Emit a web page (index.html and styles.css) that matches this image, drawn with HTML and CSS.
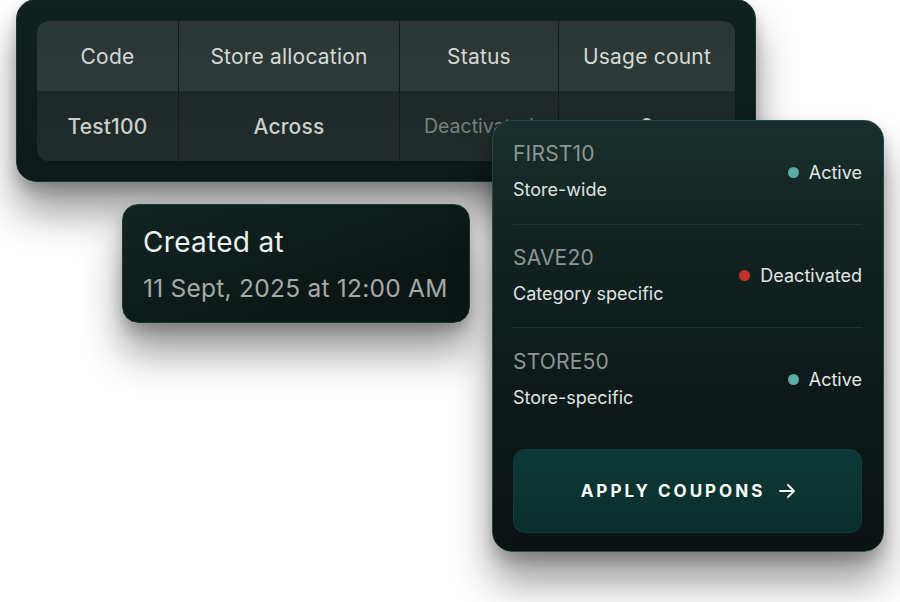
FILE: index.html
```html
<!DOCTYPE html>
<html lang="en">
<head>
<meta charset="utf-8">
<title>Coupons</title>
<link rel="stylesheet" href="styles.css">
</head>
<body>
<div class="canvas">
  <section class="card table-card">
    <div class="table">
      <div class="cell head">Code</div>
      <div class="cell head">Store allocation</div>
      <div class="cell head">Status</div>
      <div class="cell head">Usage count</div>
      <div class="cell body">Test100</div>
      <div class="cell body">Across</div>
      <div class="cell body muted">Deactivated</div>
      <div class="cell body">0</div>
    </div>
  </section>

  <section class="card created-card">
    <div class="created-title">Created at</div>
    <div class="created-date">11 Sept, 2025 at 12:00 AM</div>
  </section>

  <section class="card coupon-card">
    <div class="coupon-row">
      <div class="coupon-info">
        <div class="coupon-code">FIRST10</div>
        <div class="coupon-scope">Store-wide</div>
      </div>
      <div class="status"><span class="dot active"></span>Active</div>
    </div>
    <div class="coupon-row">
      <div class="coupon-info">
        <div class="coupon-code">SAVE20</div>
        <div class="coupon-scope">Category specific</div>
      </div>
      <div class="status"><span class="dot inactive"></span>Deactivated</div>
    </div>
    <div class="coupon-row last">
      <div class="coupon-info">
        <div class="coupon-code">STORE50</div>
        <div class="coupon-scope">Store-specific</div>
      </div>
      <div class="status"><span class="dot active"></span>Active</div>
    </div>
    <button class="apply">
      <span>APPLY COUPONS</span>
      <svg class="arrow" width="18" height="18" viewBox="0 0 18 18" fill="none" stroke="#ffffff" stroke-width="1.8" stroke-linecap="round" stroke-linejoin="round"><path d="M2 9h14M10 3l6 6-6 6"/></svg>
    </button>
  </section>
</div>
</body>
</html>
```

FILE: styles.css
```css
* { box-sizing: border-box; }
html, body { margin: 0; padding: 0; background: #ffffff; }
body { font-family: "Inter", "Noto Sans", sans-serif; width: 900px; height: 602px; overflow: hidden; }

.canvas { position: relative; width: 900px; height: 602px; }

.card {
  position: absolute;
  border: 1px solid #1a3f3b;
  box-shadow: 0 30px 40px rgba(0, 0, 0, 0.4), 0 8px 14px rgba(0, 0, 0, 0.2);
}

/* Table card */
.table-card {
  left: 16px; top: -1px; width: 740px; height: 183px;
  border-radius: 20px;
  background: linear-gradient(180deg, #10211f 0%, #0d1a18 100%);
  padding: 21px 20px 20px 20px;
  border-color: #173a36;
}
.table {
  display: grid;
  grid-template-columns: 141px 221px 159px 177px;
  grid-template-rows: 70px 70px;
  border-radius: 12px;
  overflow: hidden;
}
.cell {
  display: flex; align-items: center; justify-content: center;
  font-size: 21px;
  border-left: 1px solid #131c1b;
  letter-spacing: 0.2px;
}
.cell:nth-child(4n+1) { border-left: none; }
.head { background: linear-gradient(180deg, #2b3634 0%, #2e3a38 100%); color: #d3d9d7; }
.body { background: linear-gradient(180deg, #1e2927 0%, #222d2b 100%); color: #c9cfcd; font-weight: 500; }
.body.muted { color: #78827f; font-weight: 400; font-size: 19.5px; letter-spacing: 0; }

/* Created card */
.created-card {
  left: 122px; top: 204px; width: 348px; height: 119px;
  border-radius: 16px;
  background: linear-gradient(160deg, #112523 0%, #0c1715 70%, #0c1715 100%);
  padding: 19px 19px 0 20px;
  border-color: #183a36;
}
.created-title { font-size: 28px; color: #eef1f0; line-height: 36px; letter-spacing: 0.3px; }
.created-date { font-size: 24.5px; color: #a3aaa8; line-height: 30px; margin-top: 13px; letter-spacing: 0.25px; white-space: nowrap; }

/* Coupon card */
.coupon-card {
  left: 492px; top: 120px; width: 392px; height: 432px;
  border-radius: 20px;
  background: linear-gradient(180deg, #18302d 0%, #112220 30%, #0d1918 65%, #0b1312 100%);
  padding: 0 21px 20px 20px;
  display: flex; flex-direction: column;
  border-color: #1f4a45;
}
.coupon-row {
  height: 103.5px;
  flex: none;
  display: flex; align-items: center; justify-content: space-between;
  border-bottom: 1px solid #1a3532;
  padding-top: 0;
}
.coupon-row.last { border-bottom: none; }
.coupon-info { display: flex; flex-direction: column; gap: 12px; }
.coupon-code { font-size: 21px; line-height: 24px; color: #8c9694; letter-spacing: 0.2px; }
.coupon-scope { font-size: 18px; line-height: 24px; color: #dfe4e3; }
.status { display: flex; align-items: center; font-size: 18px; color: #e2e7e6; gap: 10px; }
.dot { width: 11px; height: 11px; border-radius: 50%; display: inline-block; flex: none; }
.dot.active { background: #5aaca4; }
.dot.inactive { background: #c7302a; }

.apply {
  margin-top: 17px;
  height: 84px;
  flex: none;
  border: 1px solid #0f3f3b;
  border-radius: 12px;
  background: linear-gradient(180deg, #0d3936 0%, #0a2e2b 100%);
  color: #ffffff;
  font-family: "Inter", "Noto Sans", sans-serif;
  font-weight: 700;
  font-size: 17px;
  letter-spacing: 3px;
  display: flex; align-items: center; justify-content: center; gap: 13px;
  padding: 0 0 0 2px;
}
.arrow { display: block; }
```
